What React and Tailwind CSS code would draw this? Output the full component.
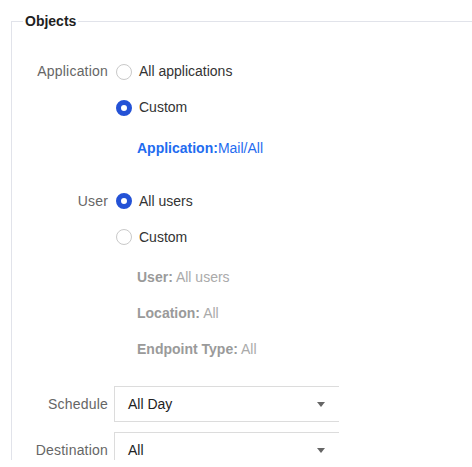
import React from 'react'

const font = { fontFamily: '"Liberation Sans", Arial, sans-serif' }

function Radio({ checked, label }) {
  return (
    <div className="flex items-center h-full">
      {checked ? (
        <span className="ml-[2px] w-4 h-4 rounded-full border-[5px] border-[#2452d6] bg-white" />
      ) : (
        <span className="ml-[2px] w-4 h-4 rounded-full border border-[#c9c9c9] bg-white" />
      )}
      <span className="ml-[7px] text-[14px] text-[#333]">{label}</span>
    </div>
  )
}

function Row({ label, className = '', children }) {
  return (
    <div className={`flex items-center ${className}`}>
      <div className="w-[96px] text-right text-[14px] text-[#666] tracking-[0.2px]">{label}</div>
      <div className="ml-[6px] h-full flex items-center">{children}</div>
    </div>
  )
}

function Detail({ name, value }) {
  return (
    <Row className="h-[36px]">
      <span className="ml-[23px] text-[14px]">
        <span className="font-bold text-[#9a9a9a]">{name}</span>
        <span className="text-[#aaa]"> {value}</span>
      </span>
    </Row>
  )
}

function Select({ value }) {
  return (
    <div className="w-[225px] h-[36px] border-l border-t border-b border-[#dcdcdc] flex items-center pl-[13px] pr-[14px]">
      <span className="flex-1 text-[14px] text-[#222]">{value}</span>
      <svg width="8" height="5" viewBox="0 0 8 5">
        <path d="M0 0h8L4 5z" fill="#666" />
      </svg>
    </div>
  )
}

export default function App() {
  return (
    <div className="w-[472px] h-[467px] bg-white" style={font}>
      <div className="h-[460px] overflow-hidden pt-[21px]">
        {/* ── Objects group ── */}
        <div className="relative ml-[11px] border-l border-t border-[#e1e3ea] h-[600px]">
          <div className="absolute -top-[11px] left-[11px] bg-white px-[2px] text-[14px] font-bold text-[#1f1f1f] leading-[20px]">
            Objects
          </div>

          <div className="pt-[31px]">
            <Row label="Application" className="h-[37px]">
              <Radio label="All applications" />
            </Row>
            <Row className="h-[35px]">
              <Radio checked label="Custom" />
            </Row>
            <Row className="h-[36px] mt-[5px]">
              <span className="ml-[23px] text-[14px] text-[#1f6cf0]">
                <span className="font-bold">Application:</span>Mail/All
              </span>
            </Row>

            <Row label="User" className="h-[36px] mt-[17px]">
              <Radio checked label="All users" />
            </Row>
            <Row className="h-[36px]">
              <Radio label="Custom" />
            </Row>
            <div className="mt-[4px]">
              <Detail name="User:" value="All users" />
              <Detail name="Location:" value="All" />
              <Detail name="Endpoint Type:" value="All" />
            </div>

            <Row label="Schedule" className="h-[36px] mt-[19px]">
              <Select value="All Day" />
            </Row>
            <Row label="Destination" className="h-[36px] mt-[10px]">
              <Select value="All" />
            </Row>
          </div>
        </div>
      </div>
    </div>
  )
}
